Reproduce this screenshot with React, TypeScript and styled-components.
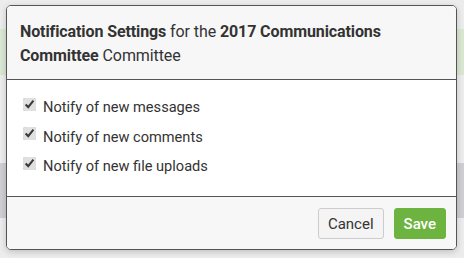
import styled, { createGlobalStyle } from "styled-components";

const GlobalStyle = createGlobalStyle`
  html, body {
    margin: 0;
    padding: 0;
    background: #ececec;
    font-family: Roboto, "Liberation Sans", sans-serif;
    overflow: hidden;
  }
`;

const Page = styled.div`
  position: relative;
  width: 464px;
  height: 258px;
  display: flex;
  flex-direction: column;
`;

const Backdrop = styled.div`
  display: flex;
  flex-direction: column;
  padding-top: 29px;
`;

const Banner = styled.div<{ $tone: string; $h: number; $mt: number }>`
  height: ${({ $h }) => $h}px;
  margin-top: ${({ $mt }) => $mt}px;
  background: ${({ $tone }) => $tone};
`;

const Modal = styled.div`
  position: absolute;
  left: 6px;
  top: 5px;
  width: 451px;
  height: 245px;
  box-sizing: border-box;
  border: 1px solid #555;
  border-radius: 5px;
  background: #fff;
  box-shadow: 0 2px 6px rgba(0, 0, 0, 0.18);
  display: flex;
  flex-direction: column;
  overflow: hidden;
`;

const Header = styled.div`
  background: #f7f7f7;
  border-bottom: 1px solid #555;
  padding: 14px 13px 0 13px;
  font-size: 16px;
  line-height: 24px;
  color: #333;
  height: 74px;
  box-sizing: border-box;
  letter-spacing: -0.1px;
`;

const Body = styled.div`
  flex: 1;
  padding: 16px 16px 0;
  display: flex;
  flex-direction: column;
  gap: 7.5px;
`;

const Option = styled.label`
  display: flex;
  align-items: center;
  gap: 7px;
  font-size: 14.6px;
  line-height: 22px;
  color: #333;
`;

const Box = styled.input`
  margin: 0;
  width: 13px;
  height: 13px;
  accent-color: #e0e0e0;
  position: relative;
  top: -3px;
`;

const Footer = styled.div`
  background: #f7f7f7;
  border-top: 1px solid #555;
  height: 53px;
  box-sizing: border-box;
  display: flex;
  justify-content: flex-end;
  align-items: center;
  gap: 10px;
  padding: 1px 10px 0 0;
`;

const Button = styled.button<{ $primary?: boolean }>`
  height: 31px;
  padding: 0 9px;
  font-family: Roboto, "Liberation Sans", sans-serif;
  font-size: 15px;
  border-radius: 3px;
  border: 1px solid ${({ $primary }) => ($primary ? "#6db33f" : "#ccc")};
  background: ${({ $primary }) => ($primary ? "#6db33f" : "#f4f4f4")};
  color: ${({ $primary }) => ($primary ? "#fff" : "#333")};
  font-weight: ${({ $primary }) => ($primary ? 500 : 400)};
`;

const options = [
  "Notify of new messages",
  "Notify of new comments",
  "Notify of new file uploads",
];

export default function App() {
  return (
    <Page>
      <GlobalStyle />
      <Backdrop>
        <Banner $tone="#d9e7d2" $h={46} $mt={0} />
        <Banner $tone="#cfcfd3" $h={55} $mt={88} />
      </Backdrop>
      <Modal>
        <Header>
          <b>Notification Settings</b> for the <b>2017 Communications Committee</b> Committee
        </Header>
        <Body>
          {options.map((o) => (
            <Option key={o}>
              <Box type="checkbox" defaultChecked />
              {o}
            </Option>
          ))}
        </Body>
        <Footer>
          <Button>Cancel</Button>
          <Button $primary>Save</Button>
        </Footer>
      </Modal>
    </Page>
  );
}
